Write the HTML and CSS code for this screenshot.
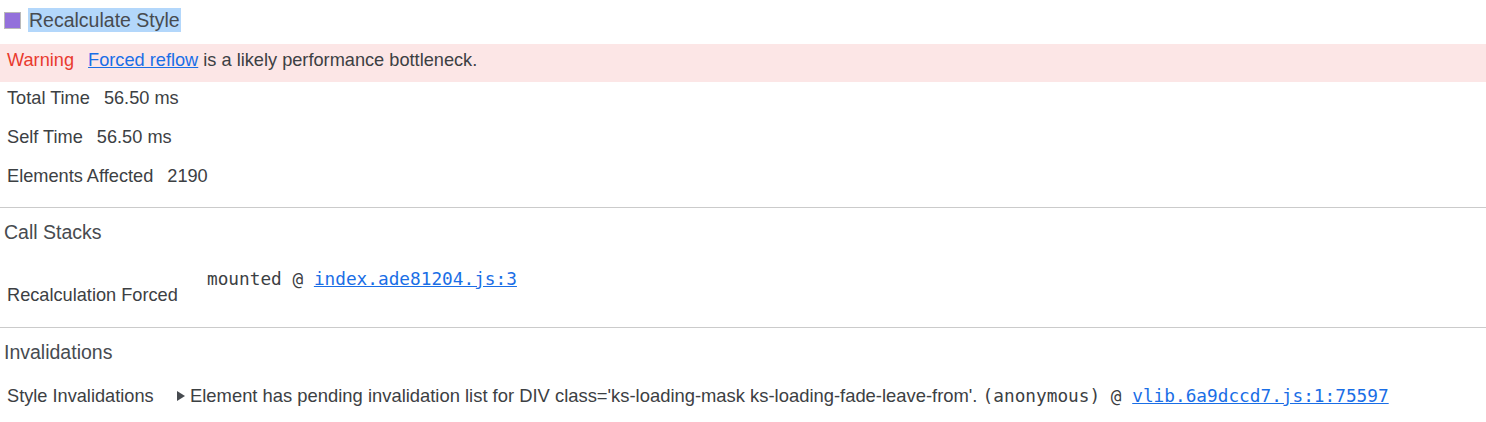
FILE: index.html
```html
<!DOCTYPE html>
<html>
<head>
<meta charset="utf-8">
<link rel="stylesheet" href="styles.css">
</head>
<body>
<div class="panel">
  <div class="title-row">
    <span class="swatch"></span>
    <span class="title">Recalculate Style</span>
  </div>
  <div class="warning">
    <span class="warn-label">Warning</span>
    <span><a class="link" href="#">Forced reflow</a> is a likely performance bottleneck.</span>
  </div>
  <div class="summary">
    <div class="row"><span class="label">Total Time</span><span>56.50 ms</span></div>
    <div class="row"><span class="label">Self Time</span><span>56.50 ms</span></div>
    <div class="row"><span class="label">Elements Affected</span><span>2190</span></div>
  </div>
  <div class="section">
    <div class="section-title">Call Stacks</div>
    <div class="stack-row">
      <span class="stack-label">Recalculation Forced</span>
      <span class="mono frame">mounted @ <a class="link" href="#">index.ade81204.js:3</a></span>
    </div>
  </div>
  <div class="section last">
    <div class="section-title">Invalidations</div>
    <div class="inv-row">
      <span class="inv-label">Style Invalidations</span>
      <span class="triangle"></span>
      <span class="inv-text">Element has pending invalidation list for DIV class='ks-loading-mask ks-loading-fade-leave-from'. <span class="mono">(anonymous) @ <a class="link" href="#">vlib.6a9dccd7.js:1:75597</a></span></span>
    </div>
  </div>
</div>
</body>
</html>
```

FILE: styles.css
```css
html, body {
  margin: 0;
  padding: 0;
  background: #ffffff;
}
body {
  font-family: "Liberation Sans", Arial, sans-serif;
  font-size: 18.2px;
  color: #3c4043;
}
.panel {
  width: 1486px;
}
.title-row {
  display: flex;
  align-items: center;
  height: 44px;
  padding: 0 0 4px 4px;
  box-sizing: border-box;
}
.swatch {
  width: 15px;
  height: 15px;
  background: #9370db;
  border: 1px solid #b9b9b9;
}
.title {
  margin-left: 7px;
  background: #b3d7fb;
  font-size: 19.5px;
  line-height: 24px;
  padding: 0 1px;
  color: #474b50;
}
.warning {
  display: flex;
  align-items: center;
  height: 38px;
  box-sizing: border-box;
  background: #fce6e6;
  padding: 0 0 6px 7px;
}
.warn-label {
  color: #e93a2e;
  margin-right: 14px;
}
.link {
  color: #1a6ee6;
  text-decoration: underline;
}
.summary {
  display: flex;
  flex-direction: column;
  gap: 7px;
  padding: 0 0 15px 7px;
  border-bottom: 1px solid #cbcbcb;
}
.row {
  display: flex;
  align-items: center;
  height: 32px;
}
.label {
  margin-right: 14px;
}
.section {
  border-bottom: 1px solid #cbcbcb;
}
.section.last {
  border-bottom: none;
}
.section-title {
  height: 48px;
  display: flex;
  align-items: center;
  padding-left: 4px;
  font-size: 19.5px;
  color: #474b50;
}
.stack-row {
  display: flex;
  align-items: flex-start;
  height: 71px;
  padding-left: 7px;
  box-sizing: border-box;
}
.stack-label {
  width: 200px;
  line-height: 24px;
  padding-top: 27px;
}
.mono {
  font-family: "DejaVu Sans Mono", "Liberation Mono", monospace;
  font-size: 17.75px;
}
.frame {
  line-height: 24px;
  padding-top: 11px;
}
.inv-row {
  display: flex;
  align-items: center;
  height: 36px;
  padding: 2px 0 0 7px;
}
.inv-label {
  width: 170px;
}
.triangle {
  width: 0;
  height: 0;
  border-top: 5px solid transparent;
  border-bottom: 5px solid transparent;
  border-left: 8px solid #474b50;
  margin-right: 5px;
}
.inv-text {
  white-space: nowrap;
  font-size: 18.4px;
}
```
